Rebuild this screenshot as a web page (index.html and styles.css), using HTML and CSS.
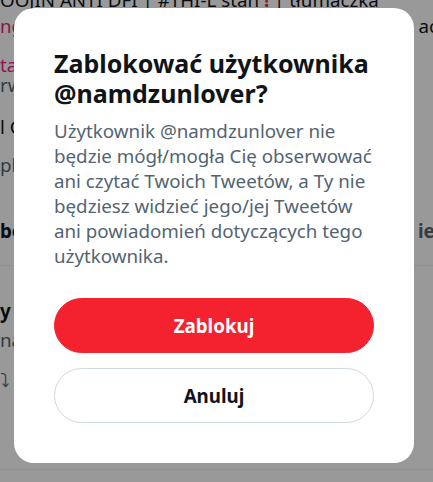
FILE: index.html
```html
<!DOCTYPE html>
<html lang="pl">
<head>
    <meta charset="UTF-8">
    <meta name="viewport" content="width=device-width, initial-scale=1.0">
    <title>Zablokuj @namdzunlover</title>
    <link rel="stylesheet" href="styles.css">
</head>
<body>
    <div class="profile">
        <div class="row row-1"><span>OOJIN ANTI DFI | #THI-L stan <b class="bang">!</b> | tłumaczka</span></div>
        <div class="row row-2"><span class="pink">ng</span><span class="cut">n acc</span></div>
        <div class="row row-3"><span class="pink">ta</span></div>
        <div class="row row-4"><span class="muted">rw</span></div>
        <div class="row row-5"><span>l C</span></div>
        <div class="row row-6"><span class="muted">pla</span></div>
        <div class="row row-7"><span class="strong">bo</span><span class="cut muted strong">ien</span></div>
        <hr class="sep sep-1">
        <div class="row row-8"><span class="strong">y w</span></div>
        <div class="row row-9"><span class="muted">na</span></div>
        <div class="row row-10"><span class="muted">&#x2935;</span></div>
        <hr class="sep sep-2">
    </div>

    <div class="overlay">
        <div class="dialog">
            <h1 class="dialog-title">Zablokować użytkownika @namdzunlover?</h1>
            <p class="dialog-text">Użytkownik @namdzunlover nie będzie mógł/mogła Cię obserwować ani czytać Twoich Tweetów, a Ty nie będziesz widzieć jego/jej Tweetów ani powiadomień dotyczących tego użytkownika.</p>
            <div class="dialog-actions">
                <button class="btn btn-block">Zablokuj</button>
                <button class="btn btn-cancel">Anuluj</button>
            </div>
        </div>
    </div>
</body>
</html>
```

FILE: styles.css
```css
*{
    padding: 0;
    margin: 0;
    box-sizing: border-box;
}
body{
    width: 433px;
    height: 482px;
    overflow: hidden;
    background-color: #fff;
    font-family: "Noto Sans", "Open Sans", sans-serif;
    color: #0f1419;
}

/* profile page behind the popup */
.profile{
    height: 482px;
    overflow: hidden;
    font-size: 18.75px;
}
.row{
    display: flex;
    justify-content: space-between;
    height: 20px;
    line-height: 20px;
    white-space: nowrap;
}
.row-1{ margin-top: -10px; }
.row-2{ margin-top: 6px; }
.row-3{ margin-top: 19px; }
.row-5{ margin-top: 22px; }
.row-6{ margin-top: 18px; }
.row-7{ margin-top: 46px; }
.row-8{ margin-top: 35px; }
.row-9{ margin-top: 9px; }
.row-10{ margin-top: 20px; }
.pink{
    color: #f91880;
}
.muted{
    color: #536471;
}
.strong{
    font-weight: 700;
}
.bang{
    color: #dd2e44;
}
.cut{
    margin-right: -14px;
}
.sep{
    border: 0;
    border-top: 1px solid #eff3f4;
}
.sep-1{ margin-top: 24px; }
.sep-2{ margin-top: 79px; }

/* popup */
.overlay{
    position: fixed;
    inset: 0;
    background-color: rgba(0, 0, 0, 0.4);
    display: flex;
    align-items: flex-start;
    padding: 8px 0 0 14px;
}
.dialog{
    width: 400px;
    background-color: #fff;
    border-radius: 20px;
    padding: 40px;
}
.dialog-title{
    font-size: 25px;
    line-height: 30px;
    font-weight: 700;
    color: #0f1419;
}
.dialog-text{
    margin-top: 10px;
    font-size: 18.75px;
    line-height: 25px;
    color: #536471;
}
.dialog-actions{
    margin-top: 30px;
    display: flex;
    flex-direction: column;
    gap: 15px;
}
.btn{
    height: 55px;
    border-radius: 9999px;
    font-family: inherit;
    font-size: 18.75px;
    font-weight: 700;
    line-height: 25px;
    cursor: pointer;
}
.btn-block{
    background-color: #f4212e;
    border: 1px solid #f4212e;
    color: #fff;
}
.btn-cancel{
    background-color: #fff;
    border: 1px solid #cfd9de;
    color: #0f1419;
}
```
